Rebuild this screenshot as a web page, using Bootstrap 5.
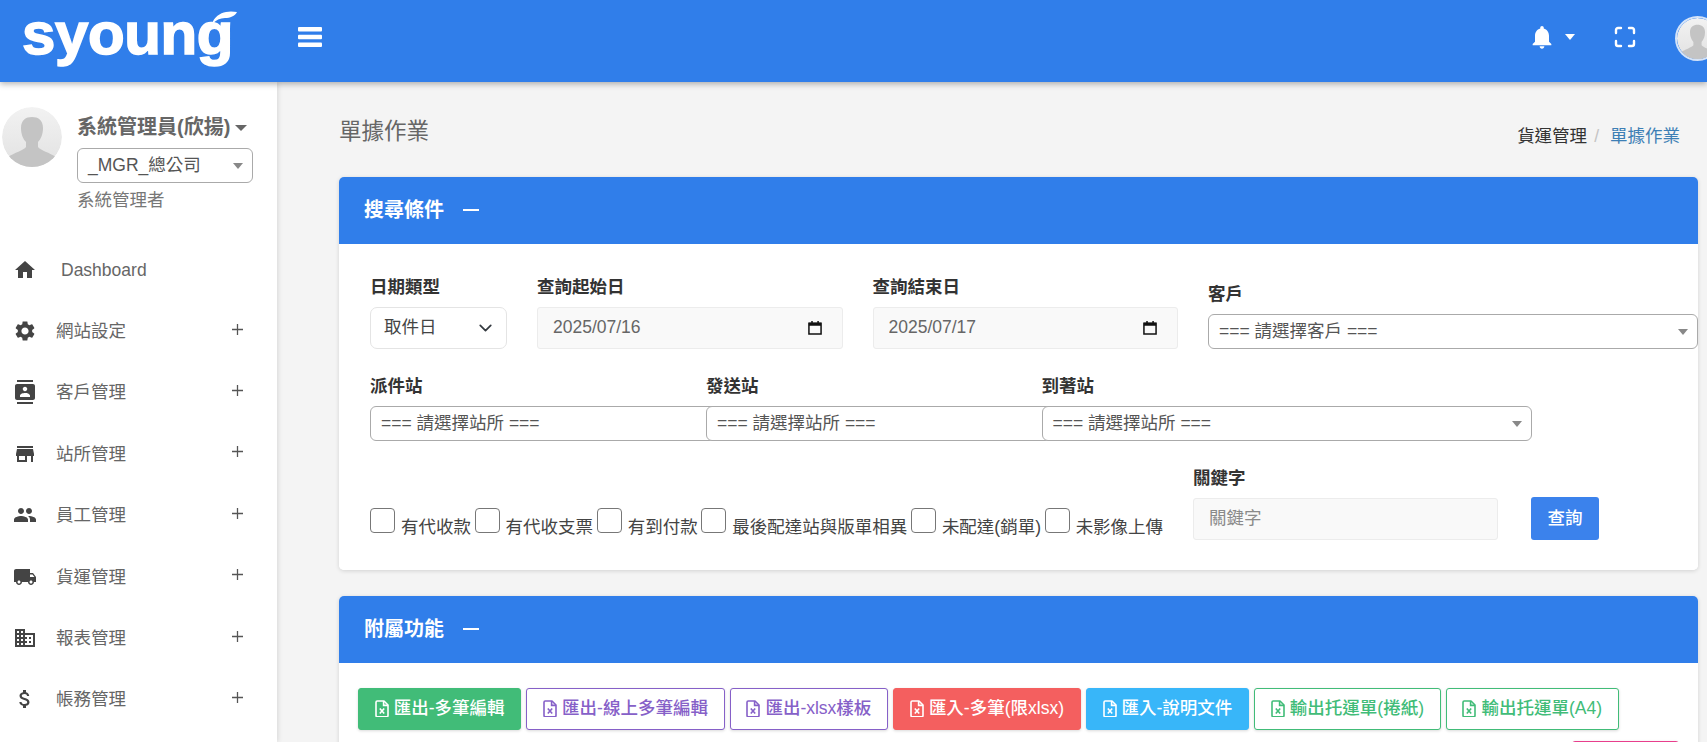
<!DOCTYPE html>
<html lang="zh-Hant">
<head>
<meta charset="utf-8">
<title>單據作業</title>
<link href="https://cdn.jsdelivr.net/npm/bootstrap@5.3.0/dist/css/bootstrap.min.css" rel="stylesheet">
<style>
html,body{height:100%;overflow:hidden}
body{font-family:"Liberation Sans","Noto Sans CJK TC",sans-serif;font-size:17.5px;line-height:1.5;background:#f4f4f4;color:#333}
.top-bar{height:82px;padding:0 0 8px;background:#307eea;box-shadow:0 2px 6px rgba(0,0,0,.3);position:relative;z-index:3;flex-wrap:nowrap;justify-content:flex-start;overflow:hidden}
.logo-mark{position:relative;width:298px;height:82px;flex:none;align-self:flex-start;color:#fff;font-weight:700;font-size:60px;line-height:.8;letter-spacing:-.4px;padding:0 0 0 22px;-webkit-text-stroke:1.6px #fff;paint-order:stroke}
.logo-text{display:block;margin-top:9.7px}
.logo-leaf{position:absolute;left:212px;top:11px;width:25px;height:13px}
.top-right{margin-left:auto;margin-right:-13px;gap:0}
.carrot{width:10px;height:6px;flex:none;margin-left:9px}
.full-ico{margin-left:38px}
.top-avatar{width:45px;height:45px;border-radius:50%;border:2px solid #d4e3f8;flex:none;margin:3px 0 0 38px}
.shell{height:calc(100vh - 82px)}
.side-nav{width:277px;flex:none;background:#fff;box-shadow:1px 0 5px rgba(0,0,0,.12);position:relative;z-index:2;overflow:hidden}
.user-box{padding:25px 0 0 2px;height:157px;gap:15px}
.user-pic{width:60px;height:60px;border-radius:50%;flex:none}
.user-info{width:176px}
.user-name{color:#666;font-weight:700;font-size:20px;line-height:30px;margin-top:5px;white-space:nowrap}
.name-caret{display:inline-block;margin-left:5px;vertical-align:3px;border-top:6px solid #666;border-left:6px solid transparent;border-right:6px solid transparent}
.pick-box{position:relative;height:35px;line-height:33px;border:1px solid #aaa;border-radius:6px;background:#fff;color:#555;padding-left:10px;white-space:nowrap}
.pick-box::after{content:"";position:absolute;right:9px;top:14px;border-top:6px solid #888;border-left:5px solid transparent;border-right:5px solid transparent}
.side-pick{margin-top:6px;width:176px}
.user-role{color:#777;margin-top:4px}
.menu-link{height:61.4px;padding:0 0 0 13px;color:#666;gap:19px}
.menu-link svg.ico{width:24px;height:24px;fill:#444;flex:none}
.menu-link .lead-text{margin-left:5px}
.menu-plus{width:11px;height:11px;margin-left:auto;margin-right:34px;stroke:#555;stroke-width:1.4;margin-top:-4px}
.main-area{flex:1;min-width:0;padding:33px 9px 0 62px}
.page-head{margin-bottom:28.5px;height:33px}
.page-title{font-size:22.5px;font-weight:400;color:#666;margin:0;line-height:33px}
.crumbs{margin:8px 18px 0 0}
.crumbs a{color:#3d7fb5;text-decoration:none}
.crumbs .breadcrumb-item{color:#333}
.crumbs .breadcrumb-item+.breadcrumb-item{padding-left:7px}
.crumbs .breadcrumb-item+.breadcrumb-item::before{color:#c4c4c4;padding-right:11px}
.panel{border:0;border-radius:5px;box-shadow:0 1px 4px rgba(0,0,0,.14);margin-bottom:26px}
.panel-top{height:67px;background:#307eea;border:0;border-radius:5px 5px 0 0;color:#fff;font-size:20px;font-weight:700;padding:0 0 0 25px;gap:19px}
.panel-top svg{width:16px;height:2.5px}
.form-zone{padding:30px 0 30px 31px;background:#fff;border-radius:0 0 5px 5px}
.field-label{font-weight:700;color:#333;margin-bottom:7px;line-height:26px;display:block}
.c-type{width:167px;flex:none}.c-date{width:335.5px;flex:none}
.c-st1{width:336px;flex:none}.c-st2{width:335.5px;flex:none}
.c-wide{flex:none}
.type-select{width:137px;height:42px;border:1px solid #e4e4e4;border-radius:7px;padding:0 13px;color:#444;font-size:17.5px;background-position:right 11px center;background-size:19px 14px}
.date-wrap{position:relative;width:305.5px}
.date-input,.key-input{height:42px;border:1px solid #ececec;border-radius:3px;background:#f9f9f9;color:#666;font-size:17.5px;padding:0 15px}
.cal-ico{position:absolute;right:21px;top:13px;width:14px;height:15px}
.wide-pick{width:490px}
.st-row{margin-top:24.5px}
.chk-row{margin-top:23.5px}
.chk-group{width:823px;flex:none;line-height:26px;white-space:nowrap;color:#444}
.chk-box{appearance:none;width:25px;height:25px;border:1px solid #777;border-radius:4px;margin:0;background:#fff}
.chk-text{margin:0 3.6px 0 6px}
.key-col{width:305px;flex:none}
.key-input{width:305px}
.key-input::placeholder{color:#8a8a8a}
.query-btn{width:68px;height:43px;flex:none;margin-left:33px;padding:0;background:#3b82ec;border:0;color:#fff;font-size:17.5px;font-weight:500;border-radius:3px}
.tools-zone{padding:25px 19px 0;background:#fff;min-height:120px}
.tool-btn{height:42px;padding:0 15.75px;font-size:17.5px;font-weight:500;border-radius:3px;white-space:nowrap;gap:5px;box-shadow:0 1px 3px rgba(0,0,0,.15);border:1px solid}
.tool-btn svg{width:14px;height:17px;flex:none}
.tb-green{background:#41bc78;border-color:#41bc78;color:#fff}
.tb-purple{background:#fff;border-color:#8660c8;color:#8660c8}
.tb-red{background:#f45f5f;border-color:#f45f5f;color:#fff}
.tb-sky{background:#38b6f9;border-color:#38b6f9;color:#fff}
.tb-ogreen{background:#fff;border-color:#41bc78;color:#41bc78}
.tb-pink{background:#fff;border-color:#e83e8c;color:#e83e8c;width:107px}
.tools-row{gap:5px}
.tools-row2{margin-top:11px}
</style>
</head>
<body>
<svg width="0" height="0" class="position-absolute">
  <symbol id="s-person" viewBox="0 0 60 60"><defs><linearGradient id="gr" x1="0" y1="0" x2="0" y2="1"><stop offset="0" stop-color="#f2f2f2"/><stop offset="1" stop-color="#e2e2e2"/></linearGradient></defs><circle cx="30" cy="30" r="30" fill="url(#gr)"/><path fill="#c4c4c4" d="M19 21c0-8 5-11 11-11s11 3 11 11c0 6-2 11-5 14v5c2 3 12 6 18 10a30 30 0 0 1-48 0c6-4 16-7 18-10v-5c-3-3-5-8-5-14z"/></symbol>
  <symbol id="s-file" viewBox="0 0 14 17"><path fill="none" stroke="currentColor" stroke-width="1.6" stroke-linejoin="round" d="M1 2.2C1 1.4 1.5 1 2.2 1H9l4 4v10.6c0 .8-.5 1.2-1.2 1.2H2.2c-.7 0-1.2-.4-1.2-1.2z"/><path fill="none" stroke="currentColor" stroke-width="1.6" d="M8.6 1v4.4H13M4.8 8.4l4.4 5.2M9.2 8.4l-4.4 5.2"/></symbol>
  <symbol id="s-plus" viewBox="0 0 12 12"><path d="M6 0v12M0 6h12"/></symbol>
</svg>

<nav class="navbar top-bar">
  <a class="logo-mark text-decoration-none" href="#"><span class="logo-text">syoung</span>
    <svg class="logo-leaf" viewBox="0 0 25 13"><path fill="#fff" d="M0 13C2 6 8 2 14 1c4-1 8-.5 11 0-2 4-7 6-12 6-5 0-9 2-13 6z"/></svg>
  </a>
  <svg width="24" height="20" viewBox="0 0 24 20"><g fill="#fff"><rect y="0" width="24" height="4.4" rx="1"/><rect y="7.8" width="24" height="4.4" rx="1"/><rect y="15.6" width="24" height="4.4" rx="1"/></g></svg>
  <div class="d-flex align-items-center top-right">
    <svg width="28" height="28" viewBox="0 0 24 24" fill="#fff"><path d="M12 22c1.1 0 2-.9 2-2h-4c0 1.1.89 2 2 2zm6-6v-5c0-3.07-1.64-5.64-4.5-6.32V4c0-.83-.67-1.5-1.5-1.5s-1.5.67-1.5 1.5v.68C7.63 5.36 6 7.92 6 11v5l-2 2v1h16v-1l-2-2z"/></svg>
    <svg class="carrot" viewBox="0 0 10 6" fill="#fff"><path d="M0 0h10L5 6z"/></svg>
    <svg class="full-ico" width="24" height="24" viewBox="0 0 24 24" fill="none" stroke="#fff" stroke-width="2.4" stroke-linecap="round"><path d="M8 3H5a2 2 0 0 0-2 2v3m18 0V5a2 2 0 0 0-2-2h-3m0 18h3a2 2 0 0 0 2-2v-3M3 16v3a2 2 0 0 0 2 2h3"/></svg>
    <svg class="top-avatar"><use href="#s-person"/></svg>
  </div>
</nav>

<div class="d-flex shell">
  <aside class="side-nav">
    <div class="d-flex user-box">
      <svg class="user-pic"><use href="#s-person"/></svg>
      <div class="user-info">
        <div class="user-name">系統管理員(欣揚)<span class="name-caret"></span></div>
        <div class="pick-box side-pick">_MGR_總公司</div>
        <div class="user-role">系統管理者</div>
      </div>
    </div>
    <div class="nav flex-column">
      <a class="nav-link d-flex align-items-center menu-link" href="#"><svg class="ico" viewBox="0 0 24 24"><path d="M10 20v-6h4v6h5v-8h3L12 3 2 12h3v8z"/></svg><span class="lead-text">Dashboard</span></a>
      <a class="nav-link d-flex align-items-center menu-link" href="#"><svg class="ico" viewBox="0 0 24 24"><path d="M19.14,12.94c0.04-0.3,0.06-0.61,0.06-0.94c0-0.32-0.02-0.64-0.07-0.94l2.03-1.58c0.18-0.14,0.23-0.41,0.12-0.61l-1.92-3.32c-0.12-0.22-0.37-0.29-0.59-0.22l-2.39,0.96c-0.5-0.38-1.03-0.7-1.62-0.94L14.4,2.81c-0.04-0.24-0.24-0.41-0.48-0.41h-3.84c-0.24,0-0.43,0.17-0.47,0.41L9.25,5.35C8.66,5.59,8.12,5.92,7.63,6.29L5.24,5.33c-0.22-0.08-0.47,0-0.59,0.22L2.74,8.87C2.62,9.08,2.66,9.34,2.86,9.48l2.03,1.58C4.84,11.36,4.8,11.69,4.8,12s0.02,0.64,0.07,0.94l-2.03,1.58c-0.18,0.14-0.23,0.41-0.12,0.61l1.92,3.32c0.12,0.22,0.37,0.29,0.59,0.22l2.39-0.96c0.5,0.38,1.03,0.7,1.62,0.94l0.36,2.54c0.05,0.24,0.24,0.41,0.48,0.41h3.84c0.24,0,0.44-0.17,0.47-0.41l0.36-2.54c0.59-0.24,1.13-0.56,1.62-0.94l2.39,0.96c0.22,0.08,0.47,0,0.59-0.22l1.92-3.32c0.12-0.22,0.07-0.47-0.12-0.61L19.14,12.94z M12,15.6c-1.98,0-3.6-1.62-3.6-3.6s1.62-3.6,3.6-3.6s3.6,1.62,3.6,3.6S13.98,15.6,12,15.6z"/></svg><span>網站設定</span><svg class="menu-plus"><use href="#s-plus"/></svg></a>
      <a class="nav-link d-flex align-items-center menu-link" href="#"><svg class="ico" viewBox="0 0 24 24"><path d="M20 0H4v2h16V0zM4 24h16v-2H4v2zM20 4H4c-1.1 0-2 .9-2 2v12c0 1.1.9 2 2 2h16c1.1 0 2-.9 2-2V6c0-1.1-.9-2-2-2zm-8 2.75c1.24 0 2.25 1.01 2.25 2.25s-1.01 2.25-2.25 2.25S9.75 10.24 9.75 9 10.76 6.75 12 6.75zM17 17H7v-1.5c0-1.67 3.33-2.5 5-2.5s5 .83 5 2.5V17z"/></svg><span>客戶管理</span><svg class="menu-plus"><use href="#s-plus"/></svg></a>
      <a class="nav-link d-flex align-items-center menu-link" href="#"><svg class="ico" viewBox="0 0 24 24"><path d="M20 4H4v2h16V4zm1 10v-2l-1-5H4l-1 5v2h1v6h10v-6h4v6h2v-6h1zm-9 4H6v-4h6v4z"/></svg><span>站所管理</span><svg class="menu-plus"><use href="#s-plus"/></svg></a>
      <a class="nav-link d-flex align-items-center menu-link" href="#"><svg class="ico" viewBox="0 0 24 24"><path d="M16 11c1.66 0 2.99-1.34 2.99-3S17.66 5 16 5c-1.66 0-3 1.34-3 3s1.34 3 3 3zm-8 0c1.66 0 2.99-1.34 2.99-3S9.66 5 8 5C6.34 5 5 6.34 5 8s1.34 3 3 3zm0 2c-2.33 0-7 1.17-7 3.5V19h14v-2.5c0-2.33-4.67-3.5-7-3.5zm8 0c-.29 0-.62.02-.97.05 1.16.84 1.97 1.97 1.97 3.45V19h6v-2.5c0-2.33-4.67-3.5-7-3.5z"/></svg><span>員工管理</span><svg class="menu-plus"><use href="#s-plus"/></svg></a>
      <a class="nav-link d-flex align-items-center menu-link" href="#"><svg class="ico" viewBox="0 0 24 24"><path d="M20 8h-3V4H3c-1.1 0-2 .9-2 2v11h2c0 1.66 1.34 3 3 3s3-1.34 3-3h6c0 1.66 1.34 3 3 3s3-1.34 3-3h2v-5l-3-4zM6 18.5c-.83 0-1.5-.67-1.5-1.5s.67-1.5 1.5-1.5 1.5.67 1.5 1.5-.67 1.5-1.5 1.5zm13.5-9l1.96 2.5H17V9.5h2.5zm-1.5 9c-.83 0-1.5-.67-1.5-1.5s.67-1.5 1.5-1.5 1.5.67 1.5 1.5-.67 1.5-1.5 1.5z"/></svg><span>貨運管理</span><svg class="menu-plus"><use href="#s-plus"/></svg></a>
      <a class="nav-link d-flex align-items-center menu-link" href="#"><svg class="ico" viewBox="0 0 24 24"><path d="M12 7V3H2v18h20V7H12zM6 19H4v-2h2v2zm0-4H4v-2h2v2zm0-4H4V9h2v2zm0-4H4V5h2v2zm4 12H8v-2h2v2zm0-4H8v-2h2v2zm0-4H8V9h2v2zm0-4H8V5h2v2zm10 12h-8v-2h2v-2h-2v-2h2v-2h-2V9h8v10zm-2-8h-2v2h2v-2zm0 4h-2v2h2v-2z"/></svg><span>報表管理</span><svg class="menu-plus"><use href="#s-plus"/></svg></a>
      <a class="nav-link d-flex align-items-center menu-link" href="#"><svg class="ico" viewBox="0 0 24 24"><path d="M11.8 10.9c-2.27-.59-3-1.2-3-2.15 0-1.09 1.01-1.85 2.7-1.85 1.78 0 2.44.85 2.5 2.1h2.21c-.07-1.72-1.12-3.3-3.21-3.81V3h-3v2.16c-1.94.42-3.5 1.68-3.5 3.61 0 2.31 1.91 3.46 4.7 4.13 2.5.6 3 1.48 3 2.41 0 .69-.49 1.79-2.7 1.79-2.06 0-2.87-.92-2.98-2.1h-2.2c.12 2.19 1.76 3.42 3.68 3.83V21h3v-2.15c1.95-.37 3.5-1.5 3.5-3.55 0-2.84-2.43-3.81-4.7-4.4z"/></svg><span>帳務管理</span><svg class="menu-plus"><use href="#s-plus"/></svg></a>
    </div>
  </aside>

  <main class="main-area">
    <div class="d-flex justify-content-between page-head">
      <h1 class="page-title">單據作業</h1>
      <ol class="breadcrumb crumbs">
        <li class="breadcrumb-item">貨運管理</li>
        <li class="breadcrumb-item"><a href="#">單據作業</a></li>
      </ol>
    </div>

    <section class="card panel">
      <div class="card-header d-flex align-items-center panel-top"><span>搜尋條件</span><svg viewBox="0 0 16 2.5"><rect width="16" height="2.5" fill="#fff"/></svg></div>
      <div class="form-zone">
        <div class="d-flex align-items-end">
          <div class="c-type"><label class="field-label">日期類型</label><select class="form-select type-select"><option>取件日</option></select></div>
          <div class="c-date"><label class="field-label">查詢起始日</label>
            <div class="date-wrap"><input class="form-control date-input" type="text" value="2025/07/16"><svg class="cal-ico" viewBox="0 0 15 16"><path fill="none" stroke="#111" stroke-width="1.6" d="M1 3.5h13v11.5H1z"/><path fill="#111" d="M1 3h13v3H1zM3.5 1h1.6v3H3.5zM10 1h1.6v3H10z"/></svg></div></div>
          <div class="c-date"><label class="field-label">查詢結束日</label>
            <div class="date-wrap"><input class="form-control date-input" type="text" value="2025/07/17"><svg class="cal-ico" viewBox="0 0 15 16"><path fill="none" stroke="#111" stroke-width="1.6" d="M1 3.5h13v11.5H1z"/><path fill="#111" d="M1 3h13v3H1zM3.5 1h1.6v3H3.5zM10 1h1.6v3H10z"/></svg></div></div>
          <div class="c-wide"><label class="field-label">客戶</label><div class="pick-box wide-pick">=== 請選擇客戶 ===</div></div>
        </div>
        <div class="d-flex st-row">
          <div class="c-st1"><label class="field-label">派件站</label><div class="pick-box wide-pick">=== 請選擇站所 ===</div></div>
          <div class="c-st2"><label class="field-label">發送站</label><div class="pick-box wide-pick">=== 請選擇站所 ===</div></div>
          <div class="c-wide"><label class="field-label">到著站</label><div class="pick-box wide-pick">=== 請選擇站所 ===</div></div>
        </div>
        <div class="d-flex align-items-end chk-row">
          <div class="chk-group"><label><input type="checkbox" class="chk-box"><span class="chk-text">有代收款</span></label><label><input type="checkbox" class="chk-box"><span class="chk-text">有代收支票</span></label><label><input type="checkbox" class="chk-box"><span class="chk-text">有到付款</span></label><label><input type="checkbox" class="chk-box"><span class="chk-text">最後配達站與版單相異</span></label><label><input type="checkbox" class="chk-box"><span class="chk-text">未配達(銷單)</span></label><label><input type="checkbox" class="chk-box"><span class="chk-text">未影像上傳</span></label></div>
          <div class="key-col"><label class="field-label">關鍵字</label><input class="form-control key-input" type="text" placeholder="關鍵字"></div>
          <button class="btn query-btn" type="button">查詢</button>
        </div>
      </div>
    </section>

    <section class="card panel">
      <div class="card-header d-flex align-items-center panel-top"><span>附屬功能</span><svg viewBox="0 0 16 2.5"><rect width="16" height="2.5" fill="#fff"/></svg></div>
      <div class="tools-zone">
        <div class="d-flex tools-row">
          <button class="btn d-inline-flex align-items-center tool-btn tb-green"><svg><use href="#s-file"/></svg>匯出-多筆編輯</button>
          <button class="btn d-inline-flex align-items-center tool-btn tb-purple"><svg><use href="#s-file"/></svg>匯出-線上多筆編輯</button>
          <button class="btn d-inline-flex align-items-center tool-btn tb-purple"><svg><use href="#s-file"/></svg>匯出-xlsx樣板</button>
          <button class="btn d-inline-flex align-items-center tool-btn tb-red"><svg><use href="#s-file"/></svg>匯入-多筆(限xlsx)</button>
          <button class="btn d-inline-flex align-items-center tool-btn tb-sky"><svg><use href="#s-file"/></svg>匯入-說明文件</button>
          <button class="btn d-inline-flex align-items-center tool-btn tb-ogreen"><svg><use href="#s-file"/></svg>輸出托運單(捲紙)</button>
          <button class="btn d-inline-flex align-items-center tool-btn tb-ogreen"><svg><use href="#s-file"/></svg>輸出托運單(A4)</button>
        </div>
        <div class="d-flex justify-content-end tools-row2"><button class="btn tool-btn tb-pink">&nbsp;</button></div>
      </div>
    </section>
  </main>
</div>
<script src="https://cdn.jsdelivr.net/npm/bootstrap@5.3.0/dist/js/bootstrap.bundle.min.js"></script>
</body>
</html>
